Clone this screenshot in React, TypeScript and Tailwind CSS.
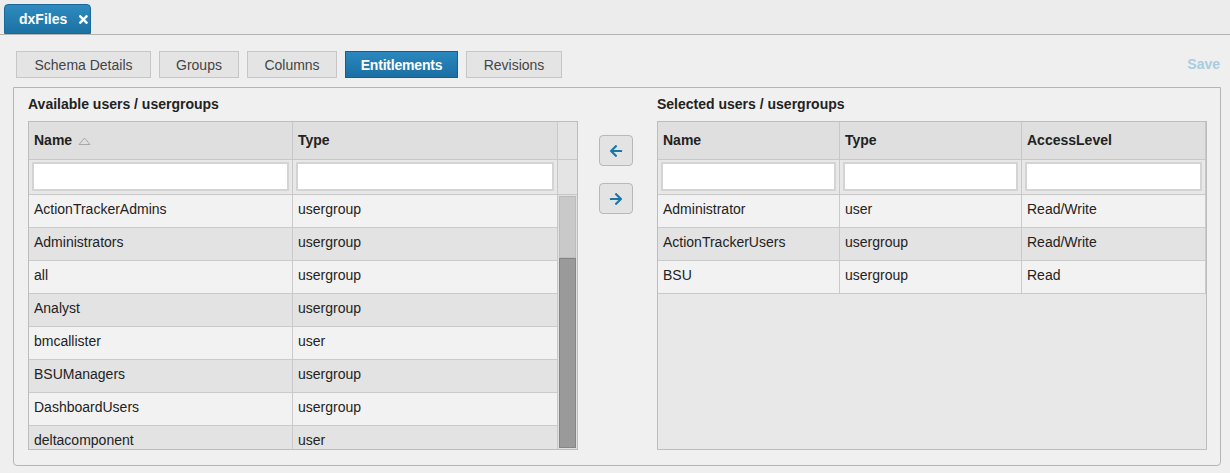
import React from "react";
import { FaArrowLeft, FaArrowRight, FaTimes } from "react-icons/fa";

const font = { fontFamily: '"Liberation Sans", Arial, Helvetica, sans-serif' };

const available: [string, string][] = [
  ["ActionTrackerAdmins", "usergroup"],
  ["Administrators", "usergroup"],
  ["all", "usergroup"],
  ["Analyst", "usergroup"],
  ["bmcallister", "user"],
  ["BSUManagers", "usergroup"],
  ["DashboardUsers", "usergroup"],
  ["deltacomponent", "user"],
];

const selected: [string, string, string][] = [
  ["Administrator", "user", "Read/Write"],
  ["ActionTrackerUsers", "usergroup", "Read/Write"],
  ["BSU", "usergroup", "Read"],
];

function FilterInput() {
  return <div className="h-[29px] bg-white border-2 border-[#d4d4d4]" />;
}

export default function App() {
  const tabs = [
    { label: "Schema Details", w: "w-[135px]" },
    { label: "Groups", w: "w-[80px]" },
    { label: "Columns", w: "w-[90px]" },
    { label: "Entitlements", w: "w-[113px]", active: true },
    { label: "Revisions", w: "w-[96px]" },
  ];
  return (
    <div className="w-[1230px] h-[473px] bg-[#efefef] text-[#222] overflow-hidden" style={font}>
      {/* top tab bar */}
      <div className="h-[35px] border-b border-[#b3b3b3] bg-[#ececec] pl-[4px] flex items-end">
        <div className="h-[30px] w-[87px] rounded-t-[4px] border border-[#1a6897] bg-gradient-to-b from-[#2e8bc0] to-[#1c71a3] flex items-center pl-[14px] gap-[10px] text-white font-bold text-[14px]">
          <span>dxFiles</span>
          <FaTimes className="text-[13px] text-white" />
        </div>
      </div>

      {/* button row */}
      <div className="flex items-center pl-[16px] pr-[10px] mt-[16px] h-[27px]">
        <div className="flex gap-[8px]">
          {tabs.map((t) => (
            <div
              key={t.label}
              className={
                t.active
                  ? `${t.w} h-[27px] pt-[1px] flex items-center justify-center border border-[#165f8c] bg-gradient-to-b from-[#2a88bf] to-[#1a6fa3] text-white font-bold text-[14px] tracking-[-0.2px]`
                  : `${t.w} h-[27px] pt-[1px] flex items-center justify-center border border-[#c6c6c6] bg-[#e4e4e4] text-[#444] text-[14px]`
              }
            >
              {t.label}
            </div>
          ))}
        </div>
        <div className="ml-auto text-[14px] font-bold text-[#a6cde0]">Save</div>
      </div>

      {/* panel */}
      <div className="ml-[13px] mr-[9px] mt-[9px] h-[379px] border border-[#b5b5b5] rounded-b-[4px] bg-[#f0f0f0] pl-[14px] pr-[13px] pt-[7px] flex">
        {/* left */}
        <div className="w-[550px] flex flex-col">
          <div className="h-[18px] font-bold text-[14px] leading-[18px]">Available users / usergroups</div>
          <div className="mt-[8px] h-[329px] border border-[#bdbdbd] overflow-hidden flex flex-col">
            <div className="grid grid-cols-[264px_265px_19px] h-[38px] bg-[#dfdfdf] border-b border-[#c8c8c8] shrink-0">
              <div className="flex items-center pl-[5px] font-bold text-[14px] border-r border-[#c8c8c8] gap-[6px]">
                Name
                <svg width="13" height="8" viewBox="0 0 13 8">
                  <path d="M1 7.5 L6.5 1 L12 7.5 Z" fill="none" stroke="#a8a8a8" strokeWidth="1" />
                </svg>
              </div>
              <div className="flex items-center pl-[5px] font-bold text-[14px] border-r border-[#c8c8c8]">Type</div>
              <div className="bg-[#e4e4e4]" />
            </div>
            <div className="grid grid-cols-[264px_265px_19px] h-[35px] bg-[#e8e8e8] border-b border-[#c8c8c8] shrink-0">
              <div className="px-[3px] pt-[2px] border-r border-[#c8c8c8]"><FilterInput /></div>
              <div className="px-[3px] pt-[2px] border-r border-[#c8c8c8]"><FilterInput /></div>
              <div className="bg-[#e4e4e4]" />
            </div>
            <div className="flex flex-1 min-h-0">
              <div className="w-[529px] border-r border-[#c8c8c8]">
                {available.map(([n, t], i) => (
                  <div
                    key={n}
                    className={`grid grid-cols-[264px_265px] h-[33px] border-b border-[#cacaca] text-[14px] ${i % 2 === 0 ? "bg-[#f2f2f2]" : "bg-[#e3e3e3]"}`}
                  >
                    <div className="flex items-center pl-[5px] pb-[3px] border-r border-[#cacaca]">{n}</div>
                    <div className="flex items-center pl-[5px] pb-[3px]">{t}</div>
                  </div>
                ))}
              </div>
              <div className="w-[19px] flex flex-col bg-[#e0e0e0] p-[1px]">
                <div className="h-[62px] bg-[#c9c9c9] border border-[#bcbcbc]" />
                <div className="flex-1 bg-[#9a9a9a] border border-[#858585]" />
              </div>
            </div>
          </div>
        </div>

        {/* arrows */}
        <div className="w-[80px] flex flex-col items-start pl-[21px] pt-[40px] gap-[17px]">
          <div className="w-[34px] h-[31px] rounded-[4px] border border-[#b8b8b8] bg-[#e3e3e3] flex items-center justify-center">
            <FaArrowLeft className="text-[14px] text-[#1a75a8]" />
          </div>
          <div className="w-[34px] h-[31px] rounded-[4px] border border-[#b8b8b8] bg-[#e3e3e3] flex items-center justify-center">
            <FaArrowRight className="text-[14px] text-[#1a75a8]" />
          </div>
        </div>

        {/* right */}
        <div className="w-[550px] flex flex-col">
          <div className="h-[18px] font-bold text-[14px] leading-[18px]">Selected users / usergroups</div>
          <div className="mt-[8px] h-[329px] border border-[#bdbdbd] overflow-hidden flex flex-col bg-[#e8e8e8]">
            <div className="grid grid-cols-[182px_182px_184px] h-[38px] bg-[#dfdfdf] border-b border-[#c8c8c8] shrink-0 font-bold text-[14px]">
              <div className="flex items-center pl-[5px] border-r border-[#c8c8c8]">Name</div>
              <div className="flex items-center pl-[5px] border-r border-[#c8c8c8]">Type</div>
              <div className="flex items-center pl-[5px] border-r border-[#c8c8c8]">AccessLevel</div>
            </div>
            <div className="grid grid-cols-[182px_182px_184px] h-[35px] bg-[#e8e8e8] border-b border-[#c8c8c8] shrink-0">
              <div className="px-[3px] pt-[2px] border-r border-[#c8c8c8]"><FilterInput /></div>
              <div className="px-[3px] pt-[2px] border-r border-[#c8c8c8]"><FilterInput /></div>
              <div className="px-[3px] pt-[2px] border-r border-[#c8c8c8]"><FilterInput /></div>
            </div>
            {selected.map(([n, t, a], i) => (
              <div
                key={n}
                className={`grid grid-cols-[182px_182px_184px] h-[33px] border-b border-[#cacaca] text-[14px] shrink-0 ${i % 2 === 0 ? "bg-[#f2f2f2]" : "bg-[#e3e3e3]"}`}
              >
                <div className="flex items-center pl-[5px] pb-[3px] border-r border-[#cacaca]">{n}</div>
                <div className="flex items-center pl-[5px] pb-[3px] border-r border-[#cacaca]">{t}</div>
                <div className="flex items-center pl-[5px] pb-[3px] border-r border-[#cacaca]">{a}</div>
              </div>
            ))}
          </div>
        </div>
      </div>
    </div>
  );
}
